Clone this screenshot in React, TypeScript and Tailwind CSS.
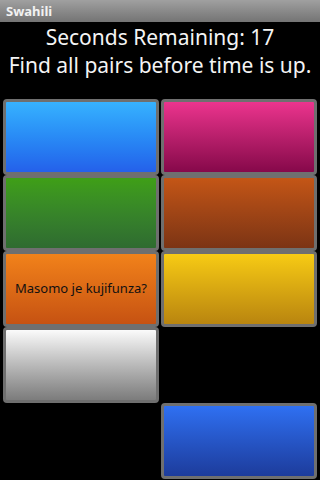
const FONT = { fontFamily: '"Noto Sans", "DejaVu Sans", sans-serif' };

type Tile = { key: string; cls: string; label?: string } | null;

// 5 rows x 2 columns, null = matched / empty slot
const TILES: Tile[] = [
  { key: "a", cls: "bg-gradient-to-b from-[#37b2ff] to-[#2560ea]" },
  { key: "b", cls: "bg-gradient-to-b from-[#ec348e] to-[#86084a]" },
  { key: "c", cls: "bg-gradient-to-b from-[#3f9f16] to-[#2f6b30]" },
  { key: "d", cls: "bg-gradient-to-b from-[#c45616] to-[#7c3414]" },
  { key: "e", cls: "bg-gradient-to-b from-[#f2821a] to-[#c65212]", label: "Masomo je kujifunza?" },
  { key: "f", cls: "bg-gradient-to-b from-[#f7cb14] to-[#b9850f]" },
  { key: "g", cls: "bg-gradient-to-b from-[#fbfbfb] to-[#7c7c7c]" },
  null,
  null,
  { key: "h", cls: "bg-gradient-to-b from-[#2f70f2] to-[#1d3c9c]" },
];

export default function App() {
  return (
    <div className="h-[480px] w-[320px] overflow-hidden bg-black text-white" style={FONT}>
      <div className="flex h-[22px] items-center bg-gradient-to-b from-[#a0a0a0] to-[#747474] px-[6px]">
        <span className="text-[13px] font-bold leading-none text-[#f2f2f2]">Swahili</span>
      </div>

      <div className="flex h-[77px] flex-col items-center pt-[1px] text-[21px] leading-[28px] text-[#f4f4f4]">
        <div className="whitespace-nowrap">Seconds Remaining: 17</div>
        <div className="whitespace-nowrap">Find all pairs before time is up.</div>
      </div>

      <div className="grid grid-cols-[156px_156px] gap-x-[2px] px-[3px]">
        {TILES.map((t, i) =>
          t ? (
            <div
              key={t.key}
              className={`flex h-[76px] items-center justify-center rounded-[4px] border-[3px] border-[#6f6f6f] ${t.cls}`}
            >
              {t.label && (
                <span className="whitespace-nowrap text-[13px] text-[#111]">{t.label}</span>
              )}
            </div>
          ) : (
            <div key={`empty-${i}`} className="h-[76px]" />
          )
        )}
      </div>
    </div>
  );
}
